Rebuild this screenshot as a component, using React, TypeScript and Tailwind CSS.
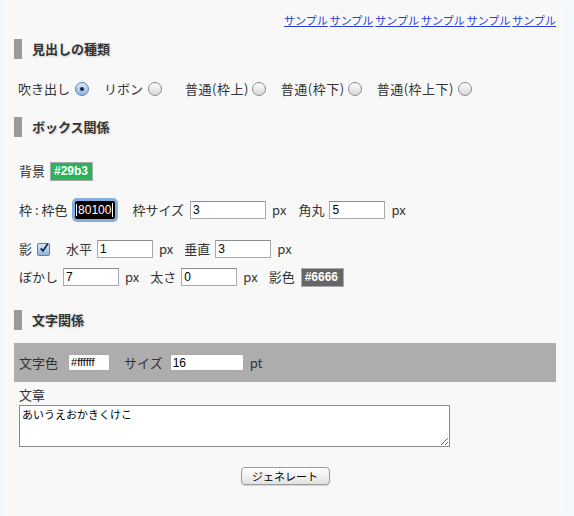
import { type ReactNode } from "react";

const Radio = ({ checked }: { checked?: boolean }) =>
  checked ? (
    <span className="inline-flex h-[14px] w-[14px] items-center justify-center rounded-full border border-[#5b7fae] bg-gradient-to-b from-[#dbe9f9] to-[#8fb3e0]">
      <span className="h-[4px] w-[4px] rounded-full bg-[#1c2b44]" />
    </span>
  ) : (
    <span className="inline-block h-[14px] w-[14px] rounded-full border border-[#8a8a8a] bg-gradient-to-b from-[#ffffff] to-[#d6d6d6]" />
  );

const Field = ({
  value,
  w,
  className = "",
}: {
  value: string;
  w: string;
  className?: string;
}) => (
  <div
    className={`flex h-[18px] items-center overflow-hidden border border-[#a9a9a9] border-t-[#8c8c8c] bg-white pl-[2px] font-['Liberation_Sans',sans-serif] text-[12px] text-black ${w} ${className}`}
  >
    {value}
  </div>
);

const Heading = ({ children, className = "" }: { children: ReactNode; className?: string }) => (
  <div className={`flex h-[20px] items-center ${className}`}>
    <div className="h-[20px] w-[8px] bg-[#999999]" />
    <div className="ml-[10px] text-[13px] font-bold text-[#333333] [text-shadow:1px_1px_2px_#c8c8c8]">
      {children}
    </div>
  </div>
);

export default function App() {
  const links = ["サンプル", "サンプル", "サンプル", "サンプル", "サンプル", "サンプル"];
  return (
    <div className="h-[516px] w-[574px] bg-[#f3f8fd] font-['Noto_Sans_CJK_JP',sans-serif] text-[13px] text-[#333333]">
      <div className="ml-[4px] flex h-[516px] w-[562px] flex-col rounded-r-[10px] bg-[#f8f8f8] pl-[10px] pr-[10px] pt-[13px]">
        <div className="flex h-[14px] items-center justify-end gap-[2px] text-[11px] leading-[14px]">
          {links.map((l, i) => (
            <a key={i} href="#" className="text-[#2b3ed6] underline">
              {l}
            </a>
          ))}
        </div>

        <Heading className="mt-[12px]">見出しの種類</Heading>

        <div className="mt-[20px] flex h-[20px] items-center pl-[4px] leading-[20px]">
          <span>吹き出し</span>
          <span className="ml-[5px] flex"><Radio checked /></span>
          <span className="ml-[15px]">リボン</span>
          <span className="ml-[5px] flex"><Radio /></span>
          <span className="ml-[23px] tracking-[0.5px]">普通(枠上)</span>
          <span className="ml-[3px] flex"><Radio /></span>
          <span className="ml-[15px] tracking-[0.5px]">普通(枠下)</span>
          <span className="ml-[3px] flex"><Radio /></span>
          <span className="ml-[15px] tracking-[0.5px]">普通(枠上下)</span>
          <span className="ml-[4px] flex"><Radio /></span>
        </div>

        <Heading className="mt-[18px]">ボックス関係</Heading>

        <div className="mt-[24px] flex h-[20px] items-center pl-[5px]">
          <span>背景</span>
          <div className="ml-[5px] flex h-[19px] w-[43px] items-center overflow-hidden whitespace-nowrap border border-[#a9a9a9] bg-[#29b35a] pl-[3px] font-['Liberation_Sans',sans-serif] text-[12px] font-bold text-white">
            #29b3
          </div>
        </div>

        <div className="mt-[19px] flex h-[20px] items-center pl-[5px]">
          <span className="whitespace-pre">枠 : 枠色</span>
          <div className="ml-[8px] flex h-[18px] w-[40px] items-center justify-end overflow-hidden rounded-[2px] bg-[#080100] pr-[2px] font-['Liberation_Sans',sans-serif] text-[12px] text-white ring-[3px] ring-[#86aedd]">
            <span className="mr-[1px] h-[12px] w-[1px] bg-white" />
            <span className="whitespace-nowrap">80100</span>
            <span className="ml-[1px] h-[14px] w-[1px] bg-white" />
          </div>
          <span className="ml-[17px]">枠サイズ</span>
          <Field value="3" w="w-[76px]" className="ml-[6px]" />
          <span className="ml-[6px]">px</span>
          <span className="ml-[12px]">角丸</span>
          <Field value="5" w="w-[56px]" className="ml-[5px]" />
          <span className="ml-[6px]">px</span>
        </div>

        <div className="mt-[19px] flex h-[20px] items-center pl-[5px]">
          <span>影</span>
          <span className="ml-[5px] flex h-[13px] w-[13px] items-center justify-center rounded-[2px] border border-[#5b7fae] bg-gradient-to-b from-[#dbe9f9] to-[#8fb3e0]">
            <svg width="12" height="12" viewBox="0 0 12 12" className="-mt-[2px] ml-[1px]">
              <path d="M2 6.5 L4.8 9.5 L10.5 1" fill="none" stroke="#15243d" strokeWidth="2" />
            </svg>
          </span>
          <span className="ml-[16px]">水平</span>
          <Field value="1" w="w-[56px]" className="ml-[5px]" />
          <span className="ml-[6px]">px</span>
          <span className="ml-[11px]">垂直</span>
          <Field value="3" w="w-[56px]" className="ml-[5px]" />
          <span className="ml-[6px]">px</span>
        </div>

        <div className="mt-[8px] flex h-[20px] items-center pl-[5px]">
          <span>ぼかし</span>
          <Field value="7" w="w-[56px]" className="ml-[5px]" />
          <span className="ml-[6px]">px</span>
          <span className="ml-[11px]">太さ</span>
          <Field value="0" w="w-[56px]" className="ml-[5px]" />
          <span className="ml-[6px]">px</span>
          <span className="ml-[11px]">影色</span>
          <div className="ml-[6px] flex h-[19px] w-[43px] items-center overflow-hidden whitespace-nowrap border border-[#a9a9a9] bg-[#666666] pl-[3px] font-['Liberation_Sans',sans-serif] text-[12px] font-bold text-white">
            #6666
          </div>
        </div>

        <Heading className="mt-[23px]">文字関係</Heading>

        <div className="mt-[13px] flex h-[39px] items-center bg-[#adadad] pl-[5px]">
          <span>文字色</span>
          <div className="ml-[10px] flex h-[17px] w-[42px] items-center border border-[#a9a9a9] bg-white pl-[2px] font-['Liberation_Sans',sans-serif] text-[11px] text-black">
            #ffffff
          </div>
          <span className="ml-[14px]">サイズ</span>
          <div className="ml-[7px] flex h-[17px] w-[74px] items-center border border-[#a9a9a9] bg-white pl-[2px] font-['Liberation_Sans',sans-serif] text-[12px] text-black">
            16
          </div>
          <span className="ml-[6px]">pt</span>
        </div>

        <div className="mt-[5px] h-[16px] pl-[5px] leading-[16px]">文章</div>
        <div className="mt-[2px] pl-[5px]">
          <textarea
            defaultValue="あいうえおかきくけこ"
            className="block h-[42px] w-[431px] border border-[#8a8a8a] bg-white px-[2px] py-0 font-['Noto_Sans_CJK_JP',sans-serif] text-[11px] leading-[16px] text-black outline-none"
          />
        </div>

        <div className="mt-[20px] flex justify-center">
          <button className="h-[18px] w-[89px] rounded-[4px] border border-[#9a9a9a] bg-gradient-to-b from-[#ffffff] to-[#e2e2e2] text-[11px] leading-[16px] text-black shadow-[0_1px_1px_rgba(0,0,0,0.15)]">
            ジェネレート
          </button>
        </div>
      </div>
    </div>
  );
}
